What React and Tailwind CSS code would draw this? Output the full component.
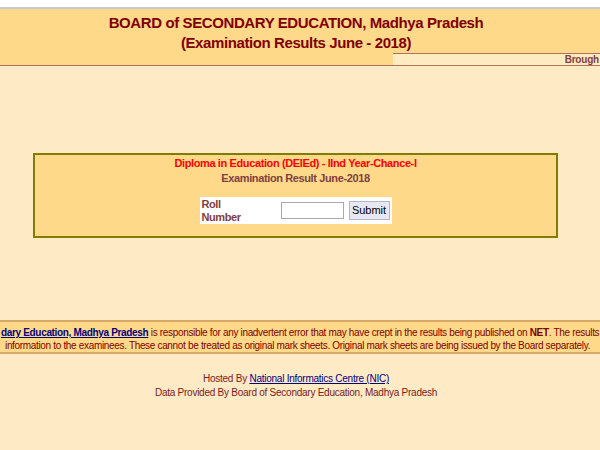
export default function App() {
  const font = { fontFamily: '"Liberation Sans", Arial, sans-serif' };
  return (
    <div className="w-[600px] h-[450px] overflow-hidden bg-[#ffeac6] flex flex-col" style={font}>
      <div className="h-[9px] bg-white border-b-2 border-[#c9c9d2]" />
      <div className="bg-[#ffd98a] border-b border-[#b0705a] flex flex-col">
        <div className="pt-[4px] pr-[8px] text-center text-[#800000] font-bold text-[15px] leading-[20px] tracking-[-0.4px]">
          <div>BOARD of SECONDARY EDUCATION, Madhya Pradesh</div>
          <div>(Examination Results June - 2018)</div>
        </div>
        <div className="flex h-[12px]">
          <div className="w-[393px]" />
          <div className="flex-1 bg-[#ffebc2] border-t border-[#b0705a] flex justify-end items-center overflow-hidden">
            <span className="text-[10px] font-bold text-[#804040] whitespace-nowrap leading-none tracking-[-0.2px] pr-[1px]">Brough</span>
          </div>
        </div>
      </div>

      <div className="h-[87px]" />

      <div className="mx-[33px] w-[525px] h-[85px] border-2 border-[#807d00] bg-[#ffd98a] flex flex-col items-center">
        <div className="pt-[1px] text-[11px] font-bold text-[#ff0000] leading-[15px] tracking-[-0.38px]">
          Diploma in Education (DElEd) - IInd Year-Chance-I
        </div>
        <div className="text-[11px] font-bold text-[#804040] leading-[14px] tracking-[-0.38px]">Examination Result June-2018</div>
        <div className="mt-[12px] w-[192px] h-[27px] bg-white flex items-center">
          <div className="w-[81px] pl-[2px] text-[11px] font-bold text-[#804040] leading-[13px] tracking-[-0.4px]">
            Roll<br />Number
          </div>
          <input
            type="text"
            className="w-[63px] h-[17px] border border-[#a9a9a9] bg-white outline-none"
          />
          <button className="ml-[5px] w-[41px] h-[19px] bg-[#e8e8f2] border border-[#b5b5c5] text-[11px] text-black leading-none">
            Submit
          </button>
        </div>
      </div>

      <div className="h-[82px]" />

      <div className="h-[34px] bg-[#ffd98a] border-t-2 border-b-2 border-[#d8a868] overflow-hidden text-[10px] text-[#800000] leading-[13px] pt-[4px] tracking-[-0.33px]">
        <div className="whitespace-nowrap pl-[1px]">
          <span className="text-[#000080] font-bold underline">dary Education, Madhya Pradesh</span> is responsible for any inadvertent error that may have crept in the results being published on <b>NET</b>. The results published on net are for immediate
        </div>
        <div className="whitespace-nowrap pl-[5px]">
          information to the examinees. These cannot be treated as original mark sheets. Original mark sheets are being issued by the Board separately.
        </div>
      </div>

      <div className="pt-[18px] pr-[8px] text-center text-[10px] text-[#7a2020] leading-[14px] tracking-[-0.25px]">
        <div>
          Hosted By <span className="text-[#000080] underline">National Informatics Centre (NIC) </span>
        </div>
        <div>Data Provided By Board of Secondary Education, Madhya Pradesh</div>
      </div>
    </div>
  );
}
